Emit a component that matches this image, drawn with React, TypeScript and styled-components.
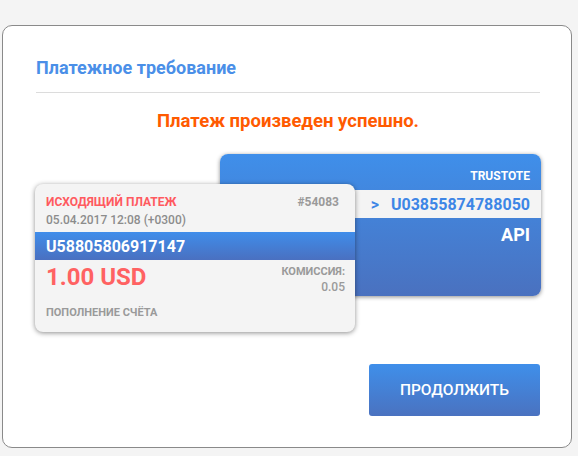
import React from "react";
import styled, { createGlobalStyle } from "styled-components";

const Global = createGlobalStyle`
  html, body { margin: 0; padding: 0; background: #f4f4f4; }
  body { font-family: Roboto, "Noto Sans", Arial, sans-serif; }
  * { box-sizing: border-box; }
`;

const Page = styled.div`
  width: 578px;
  height: 456px;
  padding: 25px 0 0 2px;
`;

const Panel = styled.div`
  width: 570px;
  height: 423px;
  background: #fff;
  border: 1px solid #8a8a8a;
  border-radius: 10px;
  padding: 31px 31px 0 33px;
  display: flex;
  flex-direction: column;
`;

const Title = styled.h1`
  margin: 0;
  font-size: 18px;
  line-height: 22px;
  font-weight: 700;
  color: #4a8fe8;
  padding-bottom: 13px;
  border-bottom: 1px solid #dcdcdc;
`;

const Success = styled.div`
  margin-top: 17px;
  text-align: center;
  font-size: 18.5px;
  line-height: 22px;
  font-weight: 700;
  color: #ff5a00;
`;

const Stage = styled.div`
  position: relative;
  margin-top: 22px;
  height: 180px;
`;

const BackCard = styled.div`
  margin-left: 184px;
  width: 321px;
  height: 142px;
  border-radius: 8px;
  background: linear-gradient(#3f8fea, #4a71bf);
  box-shadow: 0 1px 4px rgba(0, 0, 0, 0.45);
  padding-top: 14px;
  display: flex;
  flex-direction: column;
  align-items: stretch;
  overflow: hidden;
`;

const Label = styled.div<{ $size: number; $color: string; $lh?: number }>`
  font-size: ${(p) => p.$size}px;
  line-height: ${(p) => p.$lh ?? p.$size + 4}px;
  font-weight: 700;
  color: ${(p) => p.$color};
`;

const RightText = styled(Label)`
  text-align: right;
  padding-right: 11px;
`;

const LightBand = styled.div`
  margin-top: 6px;
  height: 28px;
  background: #f4f4f4;
  display: flex;
  justify-content: flex-end;
  align-items: center;
  gap: 12px;
  padding-right: 11px;
  font-size: 16px;
  font-weight: 700;
  color: #3d86e6;
`;

const FrontCard = styled.div`
  position: absolute;
  left: -1px;
  top: 30px;
  width: 320px;
  height: 148px;
  border-radius: 8px;
  background: #f4f4f4;
  box-shadow: 0 1px 5px rgba(0, 0, 0, 0.45);
  padding-top: 10px;
  display: flex;
  flex-direction: column;
  overflow: hidden;
`;

const Row = styled.div<{ $align?: string }>`
  display: flex;
  justify-content: space-between;
  align-items: ${(p) => p.$align ?? "flex-start"};
  padding: 0 16px 0 11px;
`;

const DateText = styled.div`
  margin-top: 2px;
  padding-left: 11px;
  font-size: 12px;
  line-height: 16px;
  font-weight: 500;
  color: #8c8c8c;
`;

const BlueBand = styled.div`
  margin-top: 4px;
  height: 28px;
  background: linear-gradient(#3f8dea, #4a70c0);
  padding-left: 11px;
  display: flex;
  align-items: center;
  font-size: 16px;
  font-weight: 700;
  color: #fff;
`;

const Amount = styled.div`
  font-size: 24px;
  line-height: 26px;
  font-weight: 700;
  color: #ff6262;
`;

const Fee = styled.div`
  text-align: right;
  font-size: 11px;
  line-height: 15px;
  font-weight: 700;
  color: #9a9a9a;
  margin-right: -6px;
`;

const FeeValue = styled.div`
  font-size: 12px;
  line-height: 16px;
  font-weight: 500;
`;

const Footer = styled.div`
  margin-top: 30px;
  display: flex;
  justify-content: flex-end;
`;

const Button = styled.button`
  width: 171px;
  height: 52px;
  border: none;
  border-radius: 3px;
  background: linear-gradient(#3f8fea, #4a72c0);
  color: #fff;
  font-family: Roboto, "Noto Sans", Arial, sans-serif;
  font-size: 15.5px;
  font-weight: 500;
  cursor: pointer;
`;

export default function App() {
  return (
    <Page>
      <Global />
      <Panel>
        <Title>Платежное требование</Title>
        <Success>Платеж произведен успешно.</Success>
        <Stage>
          <BackCard>
            <RightText $size={12} $color="#fff" $lh={16}>TRUSTOTE</RightText>
            <LightBand>
              <span>&gt;</span>
              <span>U03855874788050</span>
            </LightBand>
            <RightText $size={18} $color="#fff" $lh={22} style={{ marginTop: 6 }}>
              API
            </RightText>
          </BackCard>
          <FrontCard>
            <Row>
              <Label $size={12} $color="#ff5a5f" $lh={16}>ИСХОДЯЩИЙ ПЛАТЕЖ</Label>
              <Label $size={12} $color="#9a9a9a" $lh={16}>#54083</Label>
            </Row>
            <DateText>05.04.2017 12:08 (+0300)</DateText>
            <BlueBand>U58805806917147</BlueBand>
            <Row style={{ marginTop: 4 }}>
              <Amount>1.00 USD</Amount>
              <Fee>
                КОМИССИЯ:
                <FeeValue>0.05</FeeValue>
              </Fee>
            </Row>
            <Row style={{ marginTop: 11 }}>
              <Label $size={11} $color="#9a9a9a" $lh={14}>ПОПОЛНЕНИЕ СЧЁТА</Label>
            </Row>
          </FrontCard>
        </Stage>
        <Footer>
          <Button>ПРОДОЛЖИТЬ</Button>
        </Footer>
      </Panel>
    </Page>
  );
}
